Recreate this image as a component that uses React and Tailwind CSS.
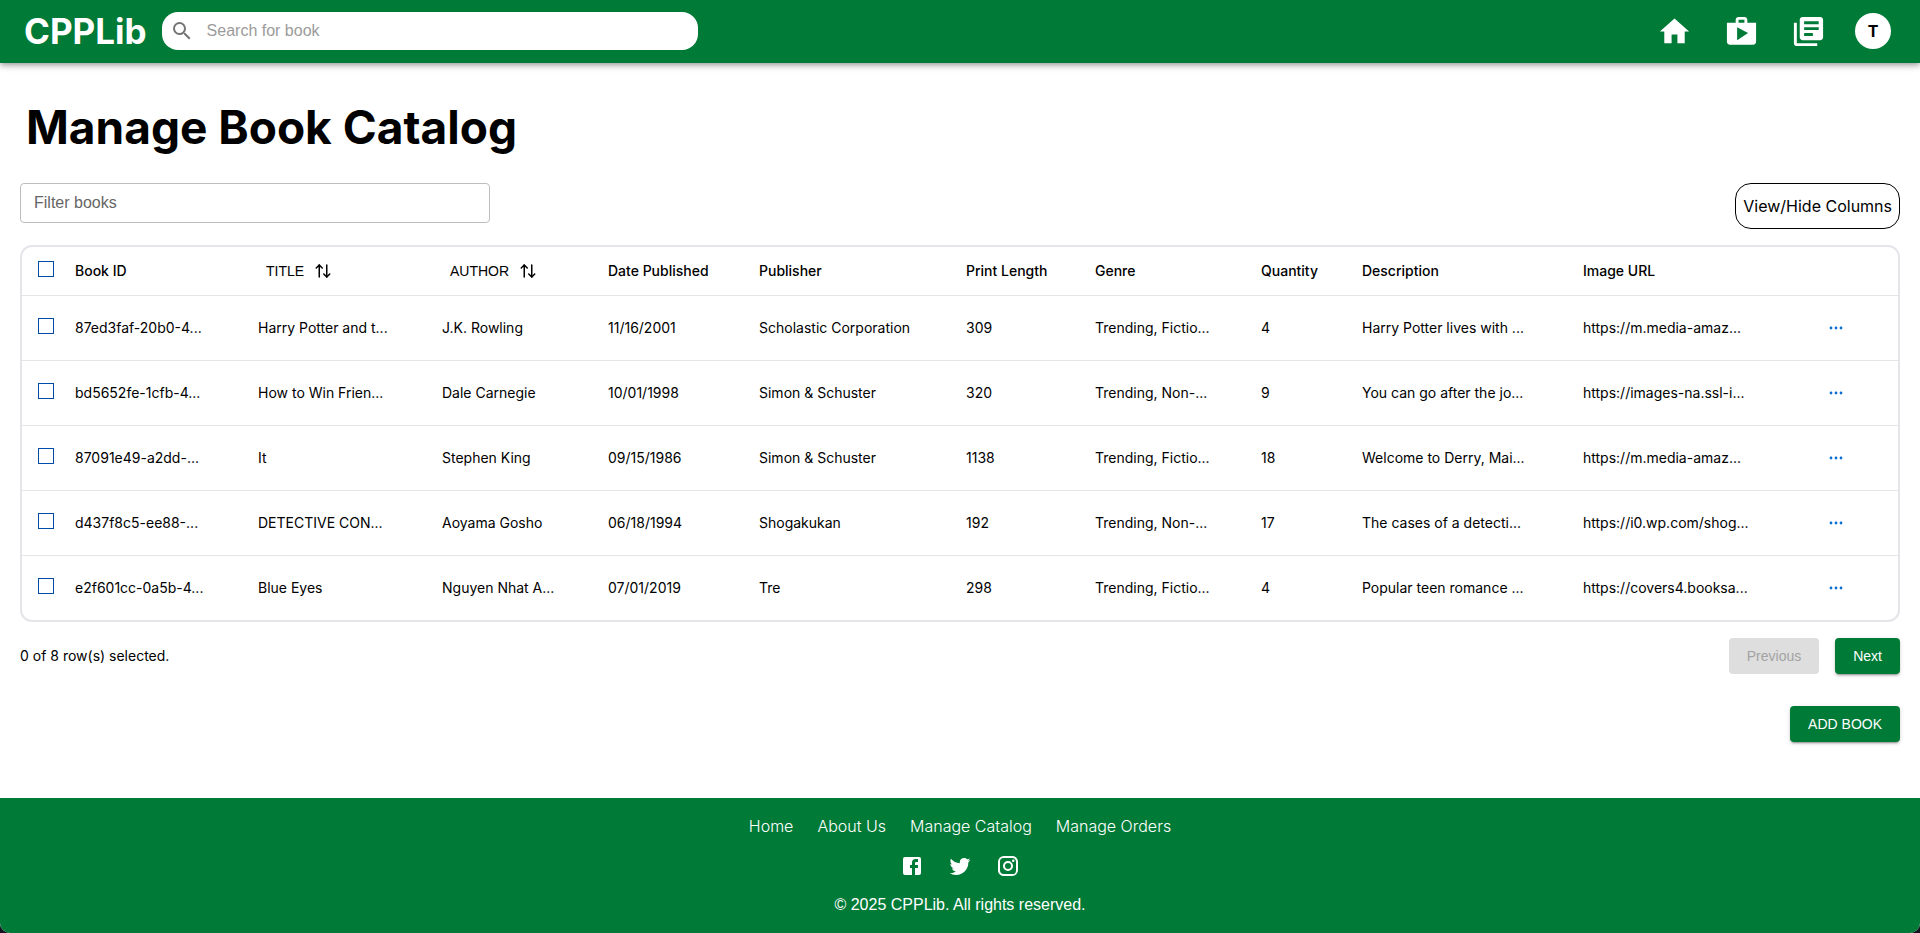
import React, { useState } from "react";
import { MdHome, MdShop, MdLibraryBooks, MdSearch } from "react-icons/md";
import { ArrowUpDown } from "lucide-react";

const books = [
  ["87ed3faf-20b0-4...", "Harry Potter and t...", "J.K. Rowling", "11/16/2001", "Scholastic Corporation", "309", "Trending, Fictio...", "4", "Harry Potter lives with ...", "https://m.media-amaz..."],
  ["bd5652fe-1cfb-4...", "How to Win Frien...", "Dale Carnegie", "10/01/1998", "Simon & Schuster", "320", "Trending, Non-...", "9", "You can go after the jo...", "https://images-na.ssl-i..."],
  ["87091e49-a2dd-...", "It", "Stephen King", "09/15/1986", "Simon & Schuster", "1138", "Trending, Fictio...", "18", "Welcome to Derry, Mai...", "https://m.media-amaz..."],
  ["d437f8c5-ee88-...", "DETECTIVE CON...", "Aoyama Gosho", "06/18/1994", "Shogakukan", "192", "Trending, Non-...", "17", "The cases of a detecti...", "https://i0.wp.com/shog..."],
  ["e2f601cc-0a5b-4...", "Blue Eyes", "Nguyen Nhat A...", "07/01/2019", "Tre", "298", "Trending, Fictio...", "4", "Popular teen romance ...", "https://covers4.booksa..."],
];

const socials = [
  {
    name: "Facebook",
    d: "M5 3h14a2 2 0 0 1 2 2v14a2 2 0 0 1-2 2H5a2 2 0 0 1-2-2V5a2 2 0 0 1 2-2m13 2h-2.5A3.5 3.5 0 0 0 12 8.5V11h-2v3h2v7h3v-7h3v-3h-3V9a1 1 0 0 1 1-1h2V5z",
  },
  {
    name: "Twitter",
    d: "M22.46 6c-.77.35-1.6.58-2.46.69.88-.53 1.56-1.37 1.88-2.38-.83.5-1.75.85-2.72 1.05C18.37 4.5 17.26 4 16 4c-2.35 0-4.27 1.92-4.27 4.29 0 .34.04.67.11.98C8.28 9.09 5.11 7.38 3 4.79c-.37.63-.58 1.37-.58 2.15 0 1.49.75 2.81 1.91 3.56-.71 0-1.37-.2-1.95-.5v.03c0 2.08 1.48 3.82 3.44 4.21a4.22 4.22 0 0 1-1.93.07 4.28 4.28 0 0 0 4 2.98 8.521 8.521 0 0 1-5.33 1.84c-.34 0-.68-.02-1.02-.06C3.44 20.29 5.7 21 8.12 21 16 21 20.33 14.46 20.33 8.79c0-.19 0-.37-.01-.56.84-.6 1.56-1.36 2.14-2.23z",
  },
  {
    name: "Instagram",
    d: "M7.8 2h8.4C19.4 2 22 4.6 22 7.8v8.4a5.8 5.8 0 0 1-5.8 5.8H7.8C4.6 22 2 19.4 2 16.2V7.8A5.8 5.8 0 0 1 7.8 2m-.2 2A3.6 3.6 0 0 0 4 7.6v8.8C4 18.39 5.61 20 7.6 20h8.8a3.6 3.6 0 0 0 3.6-3.6V7.6C20 5.61 18.39 4 16.4 4H7.6m9.65 1.5a1.25 1.25 0 0 1 1.25 1.25A1.25 1.25 0 0 1 17.25 8 1.25 1.25 0 0 1 16 6.75a1.25 1.25 0 0 1 1.25-1.25M12 7a5 5 0 0 1 5 5 5 5 0 0 1-5 5 5 5 0 0 1-5-5 5 5 0 0 1 5-5m0 2a3 3 0 0 0-3 3 3 3 0 0 0 3 3 3 3 0 0 0 3-3 3 3 0 0 0-3-3z",
  },
];

function Header() {
  return (
    <header className="z-10 flex h-[63px] shrink-0 items-center bg-[#007a37] pr-[29px] pb-px pl-6 text-white shadow-[0_2px_4px_-1px_rgba(0,0,0,0.2),0_4px_5px_0_rgba(0,0,0,0.14),0_1px_10px_0_rgba(0,0,0,0.12)]">
      <a href="#home" className="text-[35px] leading-10 font-bold">CPPLib</a>
      <label className="ml-[15px] flex h-[38px] w-[536px] items-center gap-[13px] rounded-2xl bg-white pl-2 text-[#757575]">
        <MdSearch className="size-6 shrink-0" aria-hidden="true" />
        <input
          type="search"
          aria-label="Search for book"
          placeholder="Search for book"
          className="min-w-0 flex-1 bg-transparent pr-4 font-['Liberation_Sans',sans-serif] text-base text-black outline-none placeholder:text-[#9b9b9b]"
        />
      </label>
      <nav aria-label="Main" className="ml-auto flex items-center gap-8">
        <a href="#home" aria-label="Home"><MdHome className="size-[35px]" /></a>
        <a href="#orders" aria-label="Orders"><MdShop className="size-[35px]" /></a>
        <a href="#catalog" aria-label="Catalog"><MdLibraryBooks className="size-[35px]" /></a>
        <button type="button" aria-label="Account" className="-ml-[3px] size-9 rounded-full bg-white text-base font-bold text-black">
          T
        </button>
      </nav>
    </header>
  );
}

function Check({ label, ...props }) {
  return (
    <input
      type="checkbox"
      aria-label={label}
      className="mb-1 block size-4 appearance-none border border-[#004ba8] bg-white checked:bg-[#004ba8]"
      {...props}
    />
  );
}

function SortHead({ children }) {
  return (
    <th scope="col" className="px-4 text-left font-normal">
      <button type="button" className="flex items-center gap-2.5 px-2 font-['Liberation_Sans',sans-serif]">
        {children}
        <ArrowUpDown className="size-[18px]" aria-hidden="true" />
      </button>
    </th>
  );
}

function Head({ children }) {
  return <th scope="col" className="px-4 text-left font-medium">{children}</th>;
}

function Dots() {
  return (
    <svg viewBox="0 0 16 16" className="size-4 fill-[#0a6fd0]" aria-hidden="true">
      <circle cx="3" cy="8" r="1.4" />
      <circle cx="8" cy="8" r="1.4" />
      <circle cx="13" cy="8" r="1.4" />
    </svg>
  );
}

function BookTable({ selected, toggle, toggleAll }) {
  return (
    <div className="overflow-hidden rounded-xl border-2 border-[#e4e4e9]">
      <table className="w-full table-fixed border-collapse text-sm whitespace-nowrap">
        <colgroup>
          <col className="w-[37px]" />
          <col className="w-[183px]" />
          <col className="w-[184px]" />
          <col className="w-[166px]" />
          <col className="w-[151px]" />
          <col className="w-[207px]" />
          <col className="w-[129px]" />
          <col className="w-[166px]" />
          <col className="w-[101px]" />
          <col className="w-[221px]" />
          <col className="w-[221px]" />
          <col className="w-[110px]" />
        </colgroup>
        <thead>
          <tr className="h-12 border-b border-[#e4e4e9]">
            <th scope="col" className="pl-4">
              <Check label="Select all" checked={selected.length === books.length} onChange={toggleAll} />
            </th>
            <Head>Book ID</Head>
            <SortHead>TITLE</SortHead>
            <SortHead>AUTHOR</SortHead>
            <Head>Date Published</Head>
            <Head>Publisher</Head>
            <Head>Print Length</Head>
            <Head>Genre</Head>
            <Head>Quantity</Head>
            <Head>Description</Head>
            <Head>Image URL</Head>
            <td></td>
          </tr>
        </thead>
        <tbody>
          {books.map((book) => (
            <tr key={book[0]} className="h-[65px] border-b border-[#e4e4e9] last:border-b-0">
              <td className="pl-4">
                <Check label={`Select ${book[1]}`} checked={selected.includes(book[0])} onChange={() => toggle(book[0])} />
              </td>
              {book.map((value, i) => (
                <td key={i} className="px-4">{value}</td>
              ))}
              <td className="px-4">
                <button type="button" aria-label={`Actions for ${book[1]}`} className="flex h-8 w-16 items-center justify-center">
                  <Dots />
                </button>
              </td>
            </tr>
          ))}
        </tbody>
      </table>
    </div>
  );
}

const raised =
  "bg-[#007a37] text-white shadow-[0_3px_1px_-2px_rgba(0,0,0,0.2),0_2px_2px_0_rgba(0,0,0,0.14),0_1px_5px_0_rgba(0,0,0,0.12)]";
const button = "h-9 rounded px-[18px] text-sm font-['Liberation_Sans',sans-serif]";

function Footer() {
  return (
    <footer className="flex flex-col items-center rounded-b-[10px] bg-[#007a37] py-4 text-base text-white">
      <nav aria-label="Footer" className="flex gap-6 font-light">
        <a href="#home">Home</a>
        <a href="#about">About Us</a>
        <a href="#catalog">Manage Catalog</a>
        <a href="#orders">Manage Orders</a>
      </nav>
      <div className="mt-2 mb-[7px] flex gap-2">
        {socials.map((s) => (
          <a key={s.name} href={`#${s.name.toLowerCase()}`} aria-label={s.name} className="flex size-10 items-center justify-center">
            <svg viewBox="0 0 24 24" className="size-6 fill-white" aria-hidden="true"><path d={s.d} /></svg>
          </a>
        ))}
      </div>
      <p className="font-['Liberation_Sans',sans-serif]">© 2025 CPPLib. All rights reserved.</p>
    </footer>
  );
}

export default function App() {
  const [selected, setSelected] = useState([]);
  const toggle = (id) =>
    setSelected((s) => (s.includes(id) ? s.filter((x) => x !== id) : [...s, id]));
  const toggleAll = () =>
    setSelected((s) => (s.length === books.length ? [] : books.map((b) => b[0])));

  return (
    <div className="min-h-screen bg-[#14121f] font-[Inter,sans-serif] text-black">
      <div className="flex min-h-screen flex-col rounded-b-[10px] bg-white">
        <Header />
        <main className="flex flex-1 flex-col px-5">
          <h1 className="mt-8 px-1.5 text-[46px] leading-[64px] font-bold">Manage Book Catalog</h1>
          <div className="mt-6 flex items-start justify-between">
            <input
              type="text"
              aria-label="Filter books"
              placeholder="Filter books"
              className="h-10 w-[470px] rounded border border-[#bdbdbd] px-[13px] font-['Liberation_Sans',sans-serif] text-base outline-none placeholder:text-[#666]"
            />
            <button type="button" className="h-[46px] rounded-2xl border border-black px-[7px] text-base">
              View/Hide Columns
            </button>
          </div>
          <div className="mt-4">
            <BookTable selected={selected} toggle={toggle} toggleAll={toggleAll} />
          </div>
          <div className="mt-4 flex items-center gap-4">
            <p className="flex-1 text-sm">{selected.length} of 8 row(s) selected.</p>
            <button type="button" disabled className={`${button} bg-[#dedede] text-[#a3a3a3]`}>Previous</button>
            <button type="button" className={`${button} ${raised}`}>Next</button>
          </div>
          <div className="mt-8 mb-14 flex justify-end">
            <button type="button" className={`${button} ${raised}`}>ADD BOOK</button>
          </div>
        </main>
        <Footer />
      </div>
    </div>
  );
}
